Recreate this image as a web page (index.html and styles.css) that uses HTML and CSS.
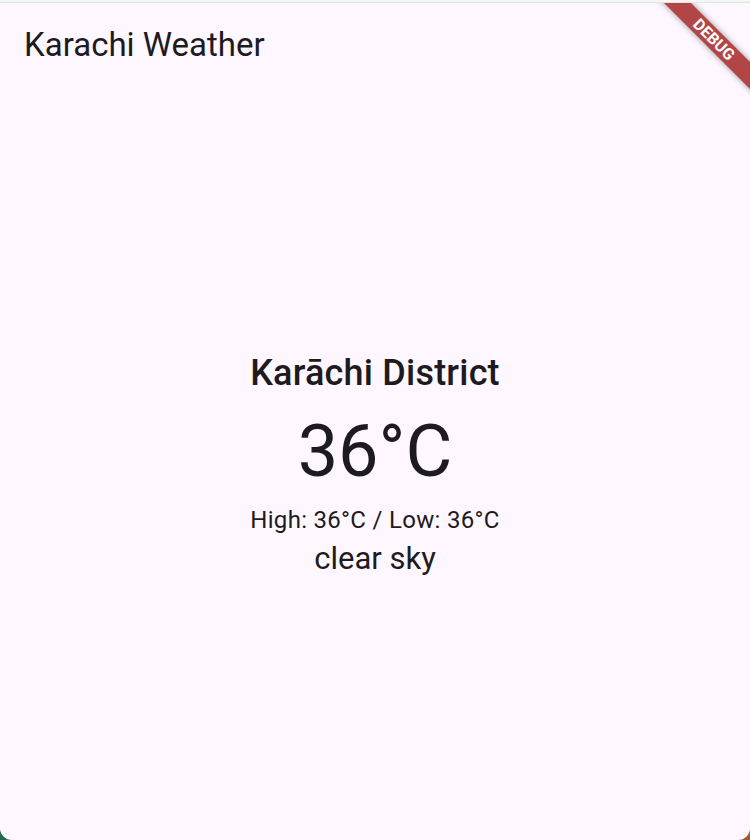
FILE: index.html
```html
<!DOCTYPE html>
<html>
<head>
<meta charset="utf-8">
<link rel="stylesheet" href="styles.css">
</head>
<body>
<div class="app">
  <header class="appbar"><h1 class="title">Karachi Weather</h1></header>
  <main class="content">
    <div class="weather">
      <div class="city">Karāchi District</div>
      <div class="temp">36°C</div>
      <div class="range">High: 36°C / Low: 36°C</div>
      <div class="desc">clear sky</div>
    </div>
  </main>
  <div class="banner">DEBUG</div>
</div>
</body>
</html>
```
FILE: styles.css
```css
html, body {
  margin: 0;
  padding: 0;
  height: 100%;
}
body {
  background: linear-gradient(90deg, #1e6a4c 0%, #1e6a4c 50%, #a0562e 50%, #a0562e 100%);
  font-family: Roboto, "Noto Sans", sans-serif;
  color: #1d1b20;
  overflow: hidden;
}
.app {
  position: relative;
  height: 837px;
  margin-top: 3px;
  background: #fef7ff;
  border-radius: 0 0 12px 12px;
  overflow: hidden;
  display: flex;
  flex-direction: column;
  box-shadow: 0 -1px 0 #dfe6df, 0 -3px 0 #f4f6f4;
}
.appbar {
  height: 84px;
  display: flex;
  align-items: center;
  padding: 0 24px;
  flex-shrink: 0;
}
.title {
  margin: 0;
  font-size: 33px;
  font-weight: 400;
  line-height: 42px;
}
.content {
  flex: 1;
  display: flex;
  align-items: center;
  justify-content: center;
}
.weather {
  display: flex;
  flex-direction: column;
  align-items: center;
  text-align: center;
  margin-bottom: 1px;
}
.city {
  font-size: 36px;
  font-weight: 500;
  line-height: 48px;
  letter-spacing: 0.2px;
  margin-bottom: 13px;
}
.temp {
  font-size: 72px;
  line-height: 84px;
}
.range {
  font-size: 24px;
  line-height: 36px;
  letter-spacing: 0.3px;
  margin-top: 8px;
}
.desc {
  font-size: 31px;
  line-height: 36px;
  margin-top: 3px;
}
.banner {
  position: absolute;
  left: 638.75px;
  top: 27.25px;
  width: 150px;
  height: 19px;
  transform: rotate(45deg);
  background: #b24646;
  color: #fff;
  font-size: 16px;
  font-weight: 700;
  line-height: 19px;
  text-align: center;
  box-shadow: 0 0 6px rgba(0,0,0,0.4);
}
```
